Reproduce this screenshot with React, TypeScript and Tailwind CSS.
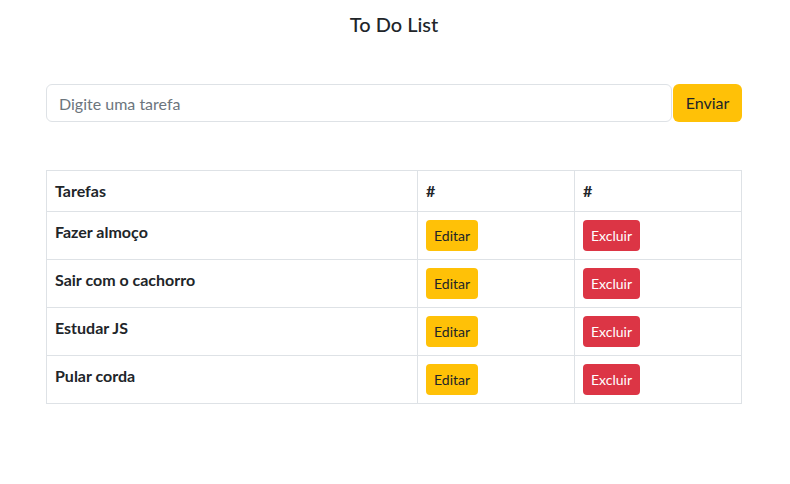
import { useState } from "react";

const initial = ["Fazer almoço", "Sair com o cachorro", "Estudar JS", "Pular corda"];

export default function App() {
  const [tasks] = useState(initial);
  const [text, setText] = useState("");

  return (
    <div className="min-h-screen bg-white text-[#212529] font-['Lato','Noto_Sans',sans-serif] text-base leading-6">
      <div className="ml-[46px] w-[696px] pt-[12px]">
        <h5 className="text-center text-[20px] font-medium leading-[24px]">To Do List</h5>

        <form className="mt-[48px] flex gap-px" onSubmit={(e) => e.preventDefault()}>
          <input
            value={text}
            onChange={(e) => setText(e.target.value)}
            placeholder="Digite uma tarefa"
            className="h-[38px] flex-1 rounded-md border border-[#dee2e6] px-3 text-base outline-none placeholder:text-[#6c757d]"
          />
          <button className="h-[38px] w-[69px] rounded-md bg-[#ffc107] text-base">Enviar</button>
        </form>

        <table className="mt-[48px] w-full border-collapse border border-[#dee2e6]">
          <thead>
            <tr className="h-[41px]">
              <th className="w-[371px] border border-[#dee2e6] px-2 text-left font-bold">Tarefas</th>
              <th className="w-[157px] border border-[#dee2e6] px-2 text-left font-bold">#</th>
              <th className="border border-[#dee2e6] px-2 text-left font-bold">#</th>
            </tr>
          </thead>
          <tbody>
            {tasks.map((t) => (
              <tr key={t} className="h-[48px]">
                <td className="border border-[#dee2e6] p-2 align-top font-bold">{t}</td>
                <td className="border border-[#dee2e6] p-2 align-top">
                  <button className="h-[31px] rounded-[4px] bg-[#ffc107] px-2 text-sm">Editar</button>
                </td>
                <td className="border border-[#dee2e6] p-2 align-top">
                  <button className="h-[31px] rounded-[4px] bg-[#dc3545] px-2 text-sm text-white">Excluir</button>
                </td>
              </tr>
            ))}
          </tbody>
        </table>
      </div>
    </div>
  );
}
